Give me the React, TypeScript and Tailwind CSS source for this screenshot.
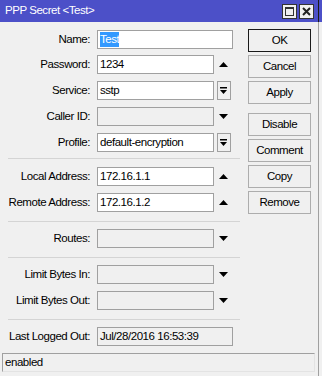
import React from 'react'

const font = { fontFamily: '"Liberation Sans", Arial, sans-serif' }

function UpArrow() {
  return (
    <svg width="9" height="5" viewBox="0 0 9 5">
      <polygon points="0,5 4.5,0 9,5" fill="#000" />
    </svg>
  )
}

function DownArrow() {
  return (
    <svg width="9" height="5" viewBox="0 0 9 5">
      <polygon points="0,0 4.5,5 9,0" fill="#000" />
    </svg>
  )
}

function ComboButton() {
  return (
    <div className="w-[14px] h-[19px] border border-[#a0a0a0] bg-[#f0f0f0] flex items-center justify-center">
      <svg width="7" height="7" viewBox="0 0 7 7">
        <rect x="0" y="0" width="7" height="1.5" fill="#000" />
        <polygon points="0,3 3.5,7 7,3" fill="#000" />
      </svg>
    </div>
  )
}

type Kind = 'full' | 'up' | 'down' | 'combo'

function Row({ label, value, kind, disabled, selected, className }: { label: string; value?: string; kind: Kind; disabled?: boolean; selected?: boolean; className?: string }) {
  const width = kind === 'full' ? 'w-[136px]' : 'w-[117px]'
  return (
    <div className={'flex items-center h-[19px] ' + (className || '')}>
      <div className="w-[91px] text-right pr-[1px] text-[11.5px] tracking-[-0.45px] text-black leading-none whitespace-nowrap">{label}</div>
      <div className="w-[6px]" />
      <div className={width + ' h-[19px] border border-[#a0a0a0] flex items-center px-[2px] text-[11.5px] tracking-[-0.45px] text-black leading-none whitespace-nowrap ' + (disabled ? 'bg-[#f0f0f0]' : 'bg-white')}>
        {selected ? <span className="bg-[#3399ff] text-white leading-[15px]">{value}</span> : value}
      </div>
      {kind === 'up' && <div className="w-[19px] flex justify-center"><UpArrow /></div>}
      {kind === 'down' && <div className="w-[19px] flex justify-center"><DownArrow /></div>}
      {kind === 'combo' && <div className="w-[19px] flex justify-center"><ComboButton /></div>}
    </div>
  )
}

function Sep({ className }: { className?: string }) {
  return <div className={'ml-[8px] w-[232px] h-[1px] bg-[#d4d4d4] ' + (className || '')} />
}

function Btn({ children, primary, className }: { children: React.ReactNode; primary?: boolean; className?: string }) {
  return (
    <div className={'w-[63px] h-[23px] flex items-center justify-center text-[11.5px] tracking-[-0.45px] text-black bg-[#f0f0f0] border ' + (primary ? 'border-[#1a1a1a]' : 'border-[#adadad]') + ' ' + (className || '')}>
      {children}
    </div>
  )
}

export default function App() {
  return (
    <div className="w-[322px] h-[376px] bg-[#f0f0f0] overflow-hidden flex flex-col" style={font}>
      {/* title bar */}
      <div className="flex h-[22px] bg-[#4c50c8]">
        <div className="w-[319px] border-r border-[#1a1a1a] flex items-center pl-[5px] pr-[4px]">
          <span className="text-white text-[11.5px] tracking-[-0.45px] flex-1 whitespace-nowrap">PPP Secret &lt;Test&gt;</span>
          <div className="w-[15px] h-[15px] bg-[#f0f0f0] border border-[#333] flex items-center justify-center">
            <div className="w-[9px] h-[9px] border border-[#333] border-t-2" />
          </div>
          <div className="w-[15px] h-[15px] ml-[2px] bg-[#f0f0f0] border border-[#333] flex items-center justify-center">
            <svg width="9" height="9" viewBox="0 0 9 9">
              <path d="M1 1 L8 8 M8 1 L1 8" stroke="#222" strokeWidth="2" />
            </svg>
          </div>
        </div>
      </div>

      <div className="w-[319px] flex-1 border-r border-[#a0a0a0] flex flex-col">
        <div className="flex">
          {/* form */}
          <div className="flex flex-col w-[248px] pt-[8px]">
            <Row label="Name:" value="Test" kind="full" selected />
            <Row label="Password:" value="1234" kind="up" className="mt-[6px]" />
            <Row label="Service:" value="sstp" kind="combo" className="mt-[7px]" />
            <Row label="Caller ID:" kind="down" disabled className="mt-[7px]" />
            <Row label="Profile:" value="default-encryption" kind="combo" className="mt-[7px]" />
            <Sep className="mt-[6px]" />
            <Row label="Local Address:" value="172.16.1.1" kind="up" className="mt-[8px]" />
            <Row label="Remote Address:" value="172.16.1.2" kind="up" className="mt-[7px]" />
            <Sep className="mt-[9px]" />
            <Row label="Routes:" kind="down" disabled className="mt-[7px]" />
            <Sep className="mt-[9px]" />
            <Row label="Limit Bytes In:" kind="down" disabled className="mt-[7px]" />
            <Row label="Limit Bytes Out:" kind="down" disabled className="mt-[7px]" />
            <Sep className="mt-[9px]" />
            <Row label="Last Logged Out:" value="Jul/28/2016 16:53:39" kind="full" disabled className="mt-[7px]" />
          </div>

          {/* buttons */}
          <div className="flex flex-col pt-[7px] gap-[3px]">
            <Btn primary>OK</Btn>
            <Btn>Cancel</Btn>
            <Btn>Apply</Btn>
            <Btn className="mt-[6px]">Disable</Btn>
            <Btn>Comment</Btn>
            <Btn>Copy</Btn>
            <Btn>Remove</Btn>
          </div>
        </div>

        {/* status bar */}
        <div className="mt-[7px] ml-[2px] mr-[3px] h-[19px] border border-t-[#a0a0a0] border-l-[#a0a0a0] border-r-[#e3e3e3] border-b-[#e3e3e3] flex items-center px-[2px] text-[11.5px] tracking-[-0.45px] text-black">
          enabled
        </div>
      </div>
    </div>
  )
}
